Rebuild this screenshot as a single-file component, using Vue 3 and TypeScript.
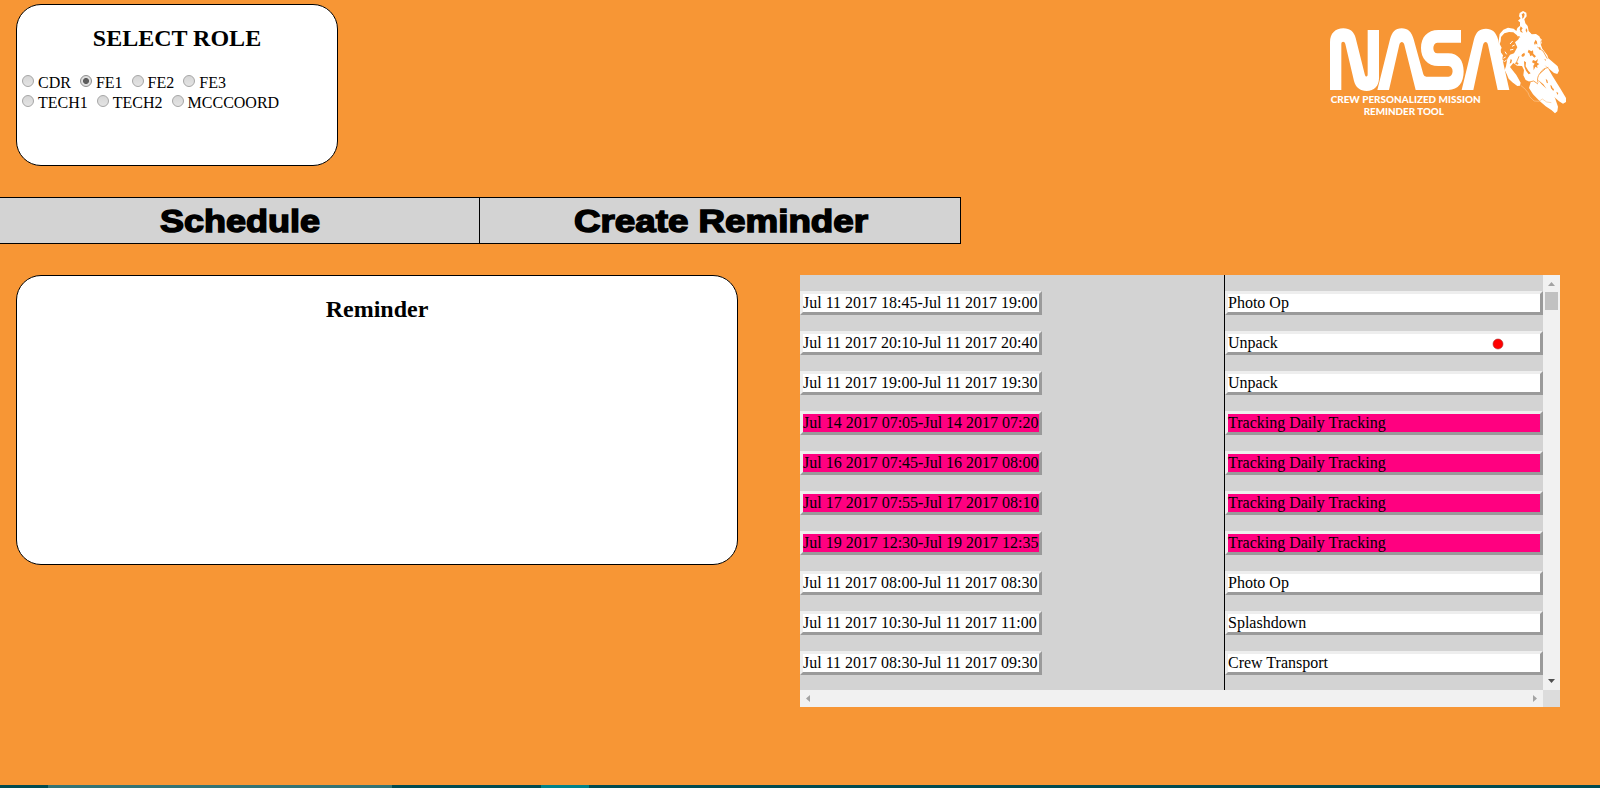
<script setup lang="ts">
import { ref } from 'vue'

interface Activity {
  time: string
  title: string
  tracked?: boolean
  flagged?: boolean
}

const roleRows: string[][] = [
  ['CDR', 'FE1', 'FE2', 'FE3'],
  ['TECH1', 'TECH2', 'MCCCOORD'],
]
const selectedRole = ref('FE1')

const tabs = [
  { label: 'Schedule', width: 160 },
  { label: 'Create Reminder', width: 294 },
]

const activities: Activity[] = [
  { time: 'Jul 11 2017 18:45-Jul 11 2017 19:00', title: 'Photo Op' },
  { time: 'Jul 11 2017 20:10-Jul 11 2017 20:40', title: 'Unpack', flagged: true },
  { time: 'Jul 11 2017 19:00-Jul 11 2017 19:30', title: 'Unpack' },
  { time: 'Jul 14 2017 07:05-Jul 14 2017 07:20', title: 'Tracking Daily Tracking', tracked: true },
  { time: 'Jul 16 2017 07:45-Jul 16 2017 08:00', title: 'Tracking Daily Tracking', tracked: true },
  { time: 'Jul 17 2017 07:55-Jul 17 2017 08:10', title: 'Tracking Daily Tracking', tracked: true },
  { time: 'Jul 19 2017 12:30-Jul 19 2017 12:35', title: 'Tracking Daily Tracking', tracked: true },
  { time: 'Jul 11 2017 08:00-Jul 11 2017 08:30', title: 'Photo Op' },
  { time: 'Jul 11 2017 10:30-Jul 11 2017 11:00', title: 'Splashdown' },
  { time: 'Jul 11 2017 08:30-Jul 11 2017 09:30', title: 'Crew Transport' },
]
</script>

<template>
  <div class="page">
    <header class="header">
      <section class="card role-card">
        <h2 class="card-title">SELECT ROLE</h2>
        <div class="roles">
          <div v-for="(row, i) in roleRows" :key="i" class="role-row">
            <label v-for="role in row" :key="role" class="role" @click="selectedRole = role">
              <span class="radio" :class="{ checked: selectedRole === role }"></span>{{ role }}
            </label>
          </div>
        </div>
      </section>

      <svg class="logo" viewBox="0 0 750 375" fill="#fff">
        <path d="M30 270V127C30 100 46 85 70 85C91 85 102 96 107 114L134 222C136 232 143 232 143 223V90H177V235C177 259 162 273 140 273C120 273 107 262 102 243L76 132C74 123 64 123 64 132V270Z" />
        <path d="M172 270L210 118C216 96 226 85 245 85C264 85 275 96 281 118L310 223Q312 230 319 230H385C402 230 402 198 385 198H355C322 198 303 175 303 144C303 112 322 90 355 90H423V128H352C336 128 336 160 352 160H385C415 160 431 182 431 214C431 248 415 270 385 270H287L253 134C250 123 241 123 238 134L207 270Z" />
        <path d="M425 270L462 118C468 96 478 86 498 86C516 86 528 96 534 118L568 270H533L504 135C502 123 492 123 489 135L460 270Z" />
        <g transform="translate(522 18)">
          <path d="M77 21L87 15L97 20L98 31L91 40L94 52L101 60L104 75L113 85L126 84L136 91L141 103L139 112L145 128L160 148L163 157L191 181L195 194L190 204L180 201L159 183L151 177L163 188L176 211L198 246L216 276L216 288L207 293L195 286L174 267L160 252L148 235L130 220L143 235L167 257L183 276L192 302L190 316L183 322L173 313L155 301L136 284L117 265L105 246L110 229L95 222L88 208L90 192L84 180L69 179L58 171L48 183L67 207L80 230L78 239L70 240L55 229L44 218L38 204L32 192L36 181L40 159L48 146L60 142L70 124L63 109L75 98L69 88L58 79L45 78L31 82L21 93L20 106L17 114L23 125L18 136L27 148L24 162L10 165L5 153L12 142L10 132L13 122L14 104L17 84L28 71L42 65L59 68L67 75L70 66L78 59L78 49L72 44L80 37L75 31Z" />
          <g class="cutout">
            <path d="M83 25l6-4 3 4-2 9-6 4 1-6zM80 61l6 6-4 6 5 7-7-2-3-8zM96 66l4 6-1 8-4-6z" />
            <path d="M67 94l8-4 4 4-7 2-2 7-5-1zM125 101l4 6 1 9-5-4-2 6-3-7z" />
            <path d="M84 145l7-5 2 7-6 6-5-3zM104 131l8 5 5-3 1 10 8 8-5 4-7-7-5 3-3-9-5-3zM90 165l6 4-1 12 8 13 7 8-6 3-8-11-5-12z" />
            <path d="M117 162l8 3 7-6-3 11 7 4-7 5 2 7-7-4-5 11-1-14 4-6-8-4zM50 159l4 3-2 8-5 3zM62 171l8-2 4 4-4 3z" />
            <path d="M136 122l4 3-1 7-4-2zM151 158l5 3-2 4z" />
            <path d="M155 218l5 5 2 9-4-2zM169 237l4 2 3 8 4 2-2 6-7-8zM187 257l6 4-3 6z" />
          </g>
          <path class="seam" d="M105 228L119 225L132 234M132 230C127 214 136 202 149 189L163 184M138 202L153 189M75 151L65 175M130 123L147 135L160 158" />
          <path class="scatter" d="M35 153l-7 4M38 145l-5-8M23 163l6 2M31 168l7-7M48 114l8-9M54 121l8-4M48 132l10-2M105 80l8 7M138 98l6 5M142 107l-2 8M15 132l6 4" />
          <path class="tether" d="M80 238L93 249L102 260L107 272L120 285L135 286L145 279L158 288L172 290" />
        </g>
        <text class="logo-text" x="32" y="308" textLength="450" lengthAdjust="spacingAndGlyphs">CREW PERSONALIZED MISSION</text>
        <text class="logo-text" x="131" y="345" textLength="241" lengthAdjust="spacingAndGlyphs">REMINDER TOOL</text>
      </svg>
    </header>

    <nav class="tabs">
      <a v-for="tab in tabs" :key="tab.label" class="tab">
        <svg class="tab-label" :width="tab.width" height="45">
          <text x="0" y="34" :textLength="tab.width" lengthAdjust="spacingAndGlyphs">{{ tab.label }}</text>
        </svg>
      </a>
    </nav>

    <main class="content">
      <section class="card reminder-card">
        <h2 class="card-title">Reminder</h2>
      </section>

      <section class="schedule">
        <div class="times">
          <div v-for="(a, i) in activities" :key="i" class="item" :class="{ tracked: a.tracked }">{{ a.time }}</div>
        </div>
        <div class="titles">
          <div v-for="(a, i) in activities" :key="i" class="item" :class="{ tracked: a.tracked }">
            <span>{{ a.title }}</span>
            <svg v-if="a.flagged" class="dot" viewBox="0 0 12 12">
              <circle cx="6" cy="6" r="5" fill="#f00" stroke="#a33" stroke-width=".6" />
            </svg>
          </div>
        </div>
        <div class="vbar">
          <svg class="arrow" viewBox="0 0 17 17"><path d="M5 11L8.500 7L12 11Z" fill="#a3a3a3" /></svg>
          <div class="thumb"></div>
          <svg class="arrow arrow-end" viewBox="0 0 17 17"><path d="M5 6L8.500 10L12 6Z" fill="#505050" /></svg>
        </div>
        <div class="hbar">
          <svg class="arrow" viewBox="0 0 17 17"><path d="M10 5L6 8.500L10 12Z" fill="#a3a3a3" /></svg>
          <svg class="arrow" viewBox="0 0 17 17"><path d="M7 5L11 8.500L7 12Z" fill="#a3a3a3" /></svg>
        </div>
        <div class="corner"></div>
      </section>
    </main>

    <footer class="strip">
      <span class="strip-search"></span>
      <span class="strip-active"></span>
    </footer>
  </div>
</template>

<style>
html,
body {
  margin: 0;
  overflow: hidden;
  background: #f79635;
}
</style>

<style scoped>
.page {
  box-sizing: border-box;
  display: flex;
  flex-direction: column;
  width: 1600px;
  height: 788px;
  padding-top: 4px;
  background: #f79635;
  color: #000;
  font-family: "Liberation Serif", "Times New Roman", serif;
  font-size: 16px;
}

.header {
  display: flex;
  justify-content: space-between;
  height: 193px;
  padding: 0 30px 0 16px;
}

.card {
  box-sizing: border-box;
  border: 1px solid #000;
  border-radius: 25px;
  background: #fff;
}

.role-card {
  width: 322px;
  height: 162px;
}

.card-title {
  margin: 19px 0 0;
  font-size: 24px;
  line-height: 28px;
  font-weight: bold;
  text-align: center;
}

.roles {
  margin-top: 21px;
}

.role-row {
  display: flex;
  gap: 4px;
  height: 20px;
  line-height: 20px;
}

.role {
  display: flex;
}

.radio {
  box-sizing: border-box;
  width: 12px;
  height: 12px;
  margin: 2px 4px 0 5px;
  border: 1px solid #a6a6a6;
  border-radius: 50%;
  background: linear-gradient(#d6d6d6, #e4e4e4);
}

.radio.checked {
  border-color: #8e8e8e;
  background: radial-gradient(circle, #5c5c5c 0 2.6px, #dedede 3.4px);
}

.logo {
  width: 250px;
  height: 125px;
  margin-top: -4px;
}

.cutout {
  fill: #f79635;
}

.seam {
  fill: none;
  stroke: #f79635;
  stroke-width: 2.5;
}

.scatter {
  fill: none;
  stroke: #fff;
  stroke-width: 3;
}

.tether {
  fill: none;
  stroke: #fbc68e;
  stroke-width: 2;
}

.logo-text {
  font-family: Lato, sans-serif;
  font-size: 29px;
  font-weight: 900;
}

.tabs {
  display: flex;
  width: 961px;
  height: 47px;
}

.tab {
  box-sizing: border-box;
  display: flex;
  justify-content: center;
  width: 480px;
  padding-left: 1px;
  border: solid #000;
  border-width: 1px 1px 1px 0;
  background: #d3d3d3;
}

.tab:last-child {
  width: 481px;
}

.tab-label {
  overflow: visible;
  fill: #000;
  stroke: #000;
  stroke-width: 1.5px;
  font-family: "Liberation Sans", Arial, sans-serif;
  font-size: 32px;
  font-weight: bold;
}

.content {
  display: flex;
  gap: 62px;
  height: 541px;
  padding: 31px 0 0 16px;
  box-sizing: border-box;
}

.reminder-card {
  width: 722px;
  height: 290px;
}

.schedule {
  display: grid;
  grid-template-columns: 424px 319px 17px;
  grid-template-rows: 415px 17px;
  height: 432px;
  background: #d3d3d3;
}

.times,
.titles {
  display: flex;
  flex-direction: column;
  align-items: flex-start;
  gap: 16px;
  padding-top: 16px;
}

.titles {
  align-items: stretch;
  border-left: 1px solid #000;
}

.item {
  box-sizing: border-box;
  display: flex;
  align-items: center;
  justify-content: space-between;
  height: 24px;
  border: 3px solid;
  border-color: #eee #9a9a9a #9a9a9a #eee;
  background: #fff;
  line-height: 18px;
  white-space: nowrap;
}

.times .item {
  width: 242px;
}

.item.tracked {
  background: #ff0080;
}

.dot {
  width: 12px;
  height: 12px;
  margin: 2px 36px 0 0;
}

.vbar,
.hbar {
  display: flex;
  background: #f1f1f1;
}

.vbar {
  flex-direction: column;
  align-items: center;
}

.hbar {
  grid-column: 1 / 3;
  justify-content: space-between;
}

.arrow {
  width: 17px;
  height: 17px;
}

.arrow-end {
  margin-top: auto;
}

.thumb {
  width: 13px;
  height: 18px;
  background: #c1c1c1;
}

.corner {
  background: #dcdcdc;
}

.strip {
  display: flex;
  height: 3px;
  background: #004b50;
}

.strip-search {
  width: 344px;
  margin-left: 48px;
  background: #337374;
}

.strip-active {
  width: 48px;
  margin-left: 149px;
  background: #008288;
}
</style>
